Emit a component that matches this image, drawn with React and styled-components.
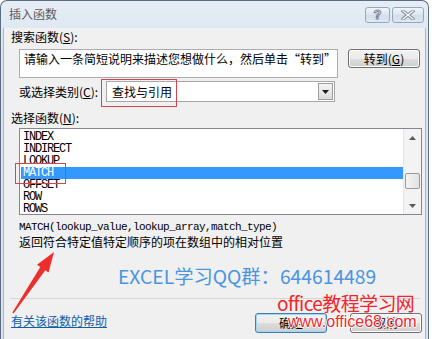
import React from "react";
import styled, { createGlobalStyle } from "styled-components";

const GlobalStyle = createGlobalStyle`
  html, body {
    margin: 0;
    padding: 0;
    background: #ffffff;
  }
  body {
    font-family: "Noto Sans CJK SC", "Noto Sans", sans-serif;
    color: #000;
  }
`;

const functions = ["INDEX", "INDIRECT", "LOOKUP", "MATCH", "OFFSET", "ROW", "ROWS"];

export default function App() {
  return (
    <>
      <GlobalStyle />
      <Frame>
        <TitleBar>
          <Title>插入函数</Title>
          <TitleButtons>
            <CaptionButton $w={25}>
              <HelpGlyph>?</HelpGlyph>
            </CaptionButton>
            <CaptionButton $w={32}>
              <svg width="14" height="10" viewBox="0 0 14 10">
                <path d="M2 1 L12 9 M12 1 L2 9" stroke="#7d8896" strokeWidth="3.2" strokeLinecap="square" />
                <path d="M2 1 L12 9 M12 1 L2 9" stroke="#ffffff" strokeWidth="1.3" strokeLinecap="square" />
              </svg>
            </CaptionButton>
          </TitleButtons>
        </TitleBar>

        <Client>
          <Label>
            搜索函数(<u>S</u>):
          </Label>
          <SearchRow>
            <SearchBox>请输入一条简短说明来描述您想做什么，然后单击“转到”</SearchBox>
            <Button $w={72} $h={19}>
              转到(<u>G</u>)
            </Button>
          </SearchRow>

          <CategoryRow>
            <CategoryLabel>
              或选择类别(<u>C</u>):
            </CategoryLabel>
            <Select>
              <SelectText>查找与引用</SelectText>
              <DropButton>
                <svg width="7" height="4" viewBox="0 0 7 4">
                  <path d="M0 0 H7 L3.5 4 Z" fill="#1a1a1a" />
                </svg>
              </DropButton>
            </Select>
          </CategoryRow>

          <FuncLabel>
            选择函数(<u>N</u>):
          </FuncLabel>
          <ListBox>
            <Items>
              {functions.map((f) => (
                <Item key={f} $selected={f === "MATCH"}>
                  {f}
                </Item>
              ))}
            </Items>
            <ScrollBar>
              <ScrollArrow>
                <svg width="7" height="4" viewBox="0 0 7 4">
                  <path d="M0 4 H7 L3.5 0 Z" fill="#5a5a5a" />
                </svg>
              </ScrollArrow>
              <Track>
                <Thumb />
              </Track>
              <ScrollArrow>
                <svg width="7" height="4" viewBox="0 0 7 4">
                  <path d="M0 0 H7 L3.5 4 Z" fill="#5a5a5a" />
                </svg>
              </ScrollArrow>
            </ScrollBar>
          </ListBox>

          <Syntax>MATCH(lookup_value,lookup_array,match_type)</Syntax>
          <Description>返回符合特定值特定顺序的项在数组中的相对位置</Description>

          <Spacer />
          <Separator />

          <Footer>
            <HelpLink>有关该函数的帮助</HelpLink>
            <ButtonGroup>
              <Button $w={72} $h={20} $default>
                确定
              </Button>
              <Button $w={72} $h={20}>
                取消
              </Button>
            </ButtonGroup>
          </Footer>
        </Client>

        <Overlay>
          <MarkBox style={{ left: 101, top: 79, width: 76, height: 28 }} />
          <MarkBox style={{ left: 15, top: 163, width: 51, height: 21 }} />
          <QQText>EXCEL学习QQ群：644614489</QQText>
          <SiteName>office教程学习网</SiteName>
          <SiteUrl>www.office68.com</SiteUrl>
          <ArrowSvg width="432" height="339" viewBox="0 0 432 339">
            <polygon
              points="54,252 48.6,272.5 45.3,270.3 13.6,313.4 12.4,312.6 40.3,266.9 37,264.7"
              fill="#ec2f2c"
            />
          </ArrowSvg>
        </Overlay>
      </Frame>
    </>
  );
}

const Frame = styled.div`
  position: relative;
  width: 429px;
  height: 339px;
  box-sizing: border-box;
  border: 1px solid #5d6d80;
  border-bottom: none;
  border-radius: 7px 7px 0 0;
  background: linear-gradient(#e6edf6, #d7e3f0 60px);
  display: flex;
  flex-direction: column;
`;

const TitleBar = styled.div`
  height: 27px;
  flex: none;
  display: flex;
  align-items: flex-start;
  padding-left: 8px;
`;

const Title = styled.div`
  margin-top: 5px;
  font-size: 12px;
  line-height: 16px;
  color: #5b5b5b;
`;

const TitleButtons = styled.div`
  margin-left: auto;
  margin-right: 4px;
  margin-top: 6px;
  display: flex;
  gap: 2px;
`;

const CaptionButton = styled.div`
  width: ${(p) => p.$w}px;
  height: 16px;
  box-sizing: border-box;
  border: 1px solid #97a6b8;
  border-radius: 3px;
  background: linear-gradient(#f0f5fa, #dbe5f0 50%, #d2deeb 51%, #dfe8f2);
  display: flex;
  align-items: center;
  justify-content: center;
`;

const HelpGlyph = styled.span`
  font-family: "Liberation Sans", sans-serif;
  font-weight: 700;
  font-size: 13px;
  line-height: 14px;
  color: #ffffff;
  -webkit-text-stroke: 1px #7d8896;
`;

const Client = styled.div`
  flex: 1;
  margin: 0 2px;
  background: #f0f0f0;
  border-left: 1px solid #a9b5c3;
  border-right: 1px solid #a9b5c3;
  padding: 0 3px 0 7px;
  display: flex;
  flex-direction: column;
  font-size: 12px;
`;

const Label = styled.div`
  margin-top: 1px;
  line-height: 16px;
  & u {
    text-underline-offset: 1px;
  }
`;

const SearchRow = styled.div`
  margin-top: 4px;
  display: flex;
  align-items: flex-start;
`;

const SearchBox = styled.div`
  margin-left: 8px;
  width: 319px;
  height: 29px;
  box-sizing: border-box;
  border: 1px solid #abadb3;
  background: #ffffff;
  padding: 2px 4px;
  line-height: 14px;
  white-space: nowrap;
  overflow: hidden;
`;

const Button = styled.div`
  margin-left: ${(p) => (p.$default ? 0 : 10)}px;
  width: ${(p) => p.$w}px;
  height: ${(p) => p.$h}px;
  box-sizing: border-box;
  border: 1px solid ${(p) => (p.$default ? "#3c7fb1" : "#707070")};
  border-radius: 3px;
  background: linear-gradient(#f2f2f2, #ebebeb 50%, #dddddd 51%, #cfcfcf);
  box-shadow: inset 0 0 0 1px ${(p) => (p.$default ? "#9fd5f7" : "#fcfcfc")};
  display: flex;
  align-items: center;
  justify-content: center;
  line-height: 14px;
  font-size: 12px;
`;

const CategoryRow = styled.div`
  margin-top: 3px;
  display: flex;
  align-items: center;
  height: 21px;
`;

const CategoryLabel = styled.div`
  margin-left: 8px;
  width: 87px;
  flex: none;
  line-height: 16px;
`;

const Select = styled.div`
  width: 229px;
  height: 21px;
  box-sizing: border-box;
  border: 1px solid #a7a7a7;
  background: #ffffff;
  display: flex;
  align-items: center;
  padding-left: 5px;
`;

const SelectText = styled.span`
  font-size: 12px;
  line-height: 14px;
`;

const DropButton = styled.div`
  margin-left: auto;
  margin-right: 1px;
  width: 15px;
  height: 17px;
  box-sizing: border-box;
  border: 1px solid #9e9e9e;
  background: linear-gradient(#f4f4f4, #dcdcdc);
  display: flex;
  align-items: center;
  justify-content: center;
`;

const FuncLabel = styled(Label)`
  margin-top: 8px;
`;

const ListBox = styled.div`
  margin-top: 2px;
  margin-left: 8px;
  width: 403px;
  height: 87px;
  box-sizing: border-box;
  border: 1px solid #828790;
  background: #ffffff;
  display: flex;
  overflow: hidden;
`;

const Items = styled.div`
  flex: 1;
  padding: 2px 0 0 1px;
`;

const Item = styled.div`
  height: 12px;
  line-height: 12px;
  padding-left: 2px;
  font-family: "Liberation Mono", monospace;
  font-size: 12px;
  letter-spacing: -1.2px;
  color: ${(p) => (p.$selected ? "#ffffff" : "#000000")};
  background: ${(p) => (p.$selected ? "#3399ff" : "transparent")};
`;

const ScrollBar = styled.div`
  width: 17px;
  flex: none;
  background: #f3f3f3;
  border-left: 1px solid #e6e6e6;
  display: flex;
  flex-direction: column;
`;

const ScrollArrow = styled.div`
  height: 17px;
  display: flex;
  align-items: center;
  justify-content: center;
`;

const Track = styled.div`
  flex: 1;
  padding-top: 27px;
`;

const Thumb = styled.div`
  margin-left: 1px;
  width: 15px;
  height: 16px;
  box-sizing: border-box;
  border: 1px solid #9b9b9b;
  border-radius: 2px;
  background: linear-gradient(90deg, #f4f4f4, #e2e2e2);
`;

const Syntax = styled.div`
  margin-top: 6px;
  margin-left: 8px;
  font-family: "Liberation Mono", monospace;
  font-size: 11px;
  letter-spacing: -0.6px;
  line-height: 12px;
`;

const Description = styled.div`
  margin-top: 1px;
  margin-left: 8px;
  line-height: 16px;
`;

const Spacer = styled.div`
  flex: 1;
`;

const Separator = styled.div`
  height: 1px;
  margin: 0 2px 0 -1px;
  background: #d5d5d5;
`;

const Footer = styled.div`
  height: 40px;
  flex: none;
  box-sizing: border-box;
  padding-top: 14px;
  display: flex;
  align-items: flex-start;
`;

const HelpLink = styled.a`
  margin-top: 1px;
  line-height: 14px;
  color: #0f5ea8;
  text-decoration: underline;
  cursor: pointer;
`;

const ButtonGroup = styled.div`
  margin-left: auto;
  display: flex;
  gap: 13px;
`;

const Overlay = styled.div`
  position: absolute;
  left: -1px;
  top: -1px;
  width: 432px;
  height: 339px;
  pointer-events: none;
`;

const MarkBox = styled.div`
  position: absolute;
  box-sizing: border-box;
  border: 1px solid #d9444a;
`;

const QQText = styled.div`
  position: absolute;
  left: 118px;
  top: 263px;
  font-size: 19.3px;
  line-height: 26px;
  color: #4a95e0;
  white-space: nowrap;
`;

const SiteName = styled.div`
  position: absolute;
  left: 277px;
  top: 290px;
  font-size: 19px;
  letter-spacing: -0.6px;
  line-height: 26px;
  color: #f2262b;
  white-space: nowrap;
`;

const SiteUrl = styled.div`
  position: absolute;
  left: 288px;
  top: 313px;
  font-family: "Liberation Sans", sans-serif;
  font-size: 16px;
  line-height: 18px;
  color: #ee2a2e;
  white-space: nowrap;
  text-shadow: 1px 0 0 #fff, -1px 0 0 #fff, 0 1px 0 #fff, 0 -1px 0 #fff;
`;

const ArrowSvg = styled.svg`
  position: absolute;
  left: 0;
  top: 0;
`;
